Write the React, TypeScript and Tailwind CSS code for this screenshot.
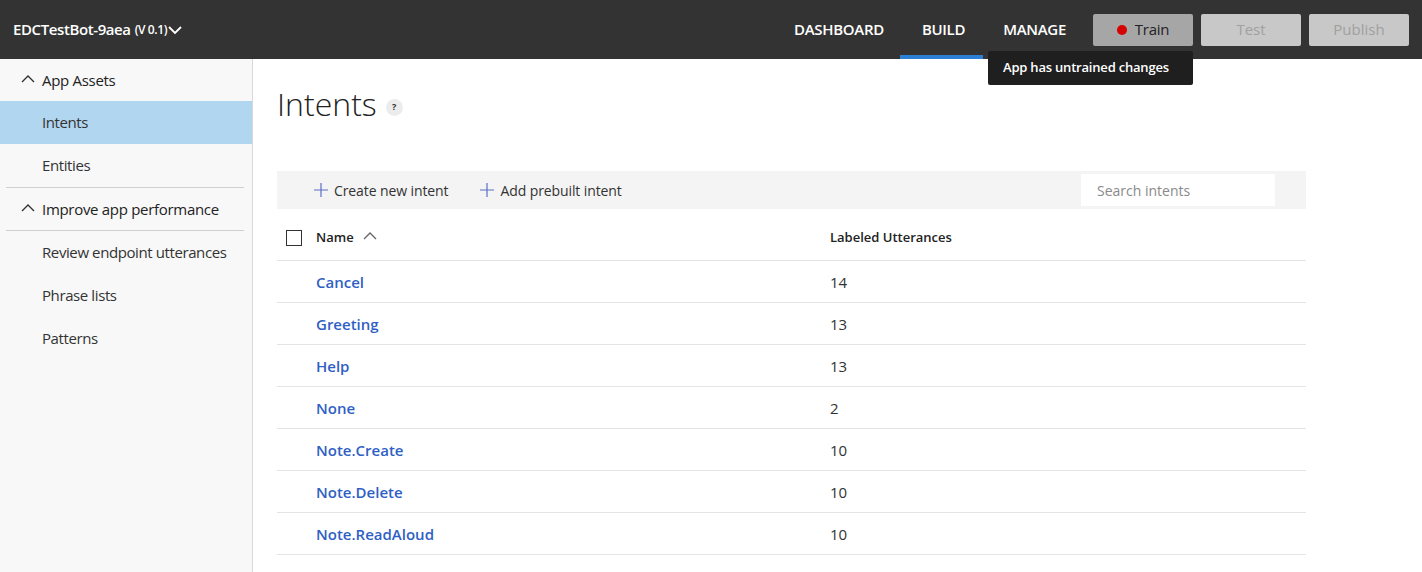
import React from "react";

const intents = [
  { name: "Cancel", count: 14 },
  { name: "Greeting", count: 13 },
  { name: "Help", count: 13 },
  { name: "None", count: 2 },
  { name: "Note.Create", count: 10 },
  { name: "Note.Delete", count: 10 },
  { name: "Note.ReadAloud", count: 10 },
];

const ChevronUp = () => (
  <svg width="16" height="10" viewBox="0 0 16 10" fill="none" stroke="currentColor" strokeWidth="1.4">
    <path d="M2 8 L8 2 L14 8" />
  </svg>
);

const Plus = () => (
  <svg width="14" height="14" viewBox="0 0 14 14" stroke="#5b6fc4" strokeWidth="1.2">
    <path d="M7 0 V14 M0 7 H14" />
  </svg>
);

const SideItem = ({ label, active }: { label: string; active?: boolean }) => (
  <div className={`h-[43px] flex items-center pl-[42px] text-[15px] tracking-[-0.4px] text-[#333] ${active ? "bg-[#b1d6f0]" : ""}`}>
    {label}
  </div>
);

const SideHeader = ({ label }: { label: string }) => (
  <div className="h-[42px] flex items-center pl-[20px] gap-[6px] text-[15px] tracking-[-0.3px] text-[#222]">
    <span className="text-[#333] -mt-[2px]"><ChevronUp /></span>
    <span>{label}</span>
  </div>
);

export default function App() {
  return (
    <div className="w-[1422px] h-[572px] overflow-hidden bg-white flex flex-col" style={{ fontFamily: '"Segoe UI", "Open Sans", sans-serif' }}>
      {/* top bar */}
      <div className="h-[59px] bg-[#333333] flex items-stretch relative shrink-0">
        <div className="flex items-center pl-[13px] text-white tracking-[-0.4px]">
          <span className="text-[15px] font-semibold">EDCTestBot-9aea</span>
          <span className="text-[12px] font-semibold ml-[4px]">(V 0.1)</span>
          <svg width="14" height="10" viewBox="0 0 14 10" fill="none" stroke="white" strokeWidth="1.8" className="ml-[1px]">
            <path d="M1 2 L7 8 L13 2" />
          </svg>
        </div>
        <div className="flex-1" />
        <div className="flex items-stretch text-white text-[15px] font-semibold tracking-[-0.3px]">
          <div className="flex items-center px-[19px]">DASHBOARD</div>
          <div className="flex items-center px-[19px] relative">
            BUILD
            <div className="absolute left-[-3px] right-[1px] bottom-0 h-[4px] bg-[#2b7fd4]" />
          </div>
          <div className="flex items-center pl-[19px] pr-[27px]">MANAGE</div>
        </div>
        <div className="flex items-center gap-[8px] pr-[13px]">
          <div className="relative">
            <button className="w-[100px] h-[32px] bg-[#a6a6a6] rounded-[2px] flex items-center justify-center gap-[8px] text-[15px] text-[#222] tracking-[-0.2px]">
              <span className="w-[10px] h-[10px] rounded-full bg-[#d50000]" />
              Train
            </button>
            <div className="absolute right-0 top-[37px] w-[205px] h-[34px] bg-[#1f1f1f] text-white text-[13px] font-semibold flex items-center pl-[15px] rounded-[2px] z-10 whitespace-nowrap tracking-[-0.2px]">
              App has untrained changes
            </div>
          </div>
          <button className="w-[100px] h-[32px] bg-[#c8c8c8] rounded-[2px] text-[15px] text-[#a0a0a0]">Test</button>
          <button className="w-[100px] h-[32px] bg-[#c8c8c8] rounded-[2px] text-[15px] text-[#a0a0a0]">Publish</button>
        </div>
      </div>

      <div className="flex flex-1 min-h-0">
        {/* sidebar */}
        <div className="w-[253px] bg-[#f8f8f8] border-r border-[#d8d8d8] shrink-0">
          <SideHeader label="App Assets" />
          <SideItem label="Intents" active />
          <SideItem label="Entities" />
          <div className="h-px bg-[#cfcfcf] ml-[6px] mr-[8px]" />
          <SideHeader label="Improve app performance" />
          <div className="h-px bg-[#cfcfcf] ml-[6px] mr-[8px]" />
          <SideItem label="Review endpoint utterances" />
          <SideItem label="Phrase lists" />
          <SideItem label="Patterns" />
        </div>

        {/* main */}
        <div className="flex-1 pl-[24px] pr-[116px]">
          <div className="flex items-center h-[28px] mt-[31px]">
            <h1 className="text-[32px] font-light text-[#222] leading-none">Intents</h1>
            <span className="ml-[9px] mt-[6px] w-[17px] h-[17px] rounded-full bg-[#ececec] text-[9px] font-bold text-[#333] flex items-center justify-center">?</span>
          </div>
          <div className="mt-[53px] h-[38px] bg-[#f4f4f4] flex items-center">
            <div className="flex items-center gap-[6px] pl-[37px] text-[14px] text-[#333] tracking-[-0.1px]">
              <Plus />
              <span>Create new intent</span>
            </div>
            <div className="flex items-center gap-[6px] pl-[32px] text-[14px] text-[#333] tracking-[-0.1px]">
              <Plus />
              <span>Add prebuilt intent</span>
            </div>
            <div className="flex-1" />
            <div className="w-[194px] h-[32px] bg-white flex items-center pl-[16px] text-[14px] text-[#8a8a8a] mr-[31px]">
              Search intents
            </div>
          </div>
          {/* header */}
          <div className="h-[52px] pt-[6px] flex items-center border-b border-[#e4e4e4] text-[13px] font-semibold text-[#222]">
            <div className="w-[39px] pl-[9px] flex items-center">
              <span className="w-[16px] h-[16px] border border-[#333] bg-white" />
            </div>
            <div className="w-[514px] flex items-center gap-[8px]">
              <span>Name</span>
              <span className="text-[#666] -mt-[3px]"><ChevronUp /></span>
            </div>
            <div>Labeled Utterances</div>
          </div>
          {intents.map((it) => (
            <div key={it.name} className="h-[42px] pt-[2px] flex items-center border-b border-[#e4e4e4] text-[15px]">
              <div className="w-[39px]" />
              <div className="w-[514px] text-[#2f5fc4] font-semibold">{it.name}</div>
              <div className="text-[#333]">{it.count}</div>
            </div>
          ))}
        </div>
      </div>
    </div>
  );
}
